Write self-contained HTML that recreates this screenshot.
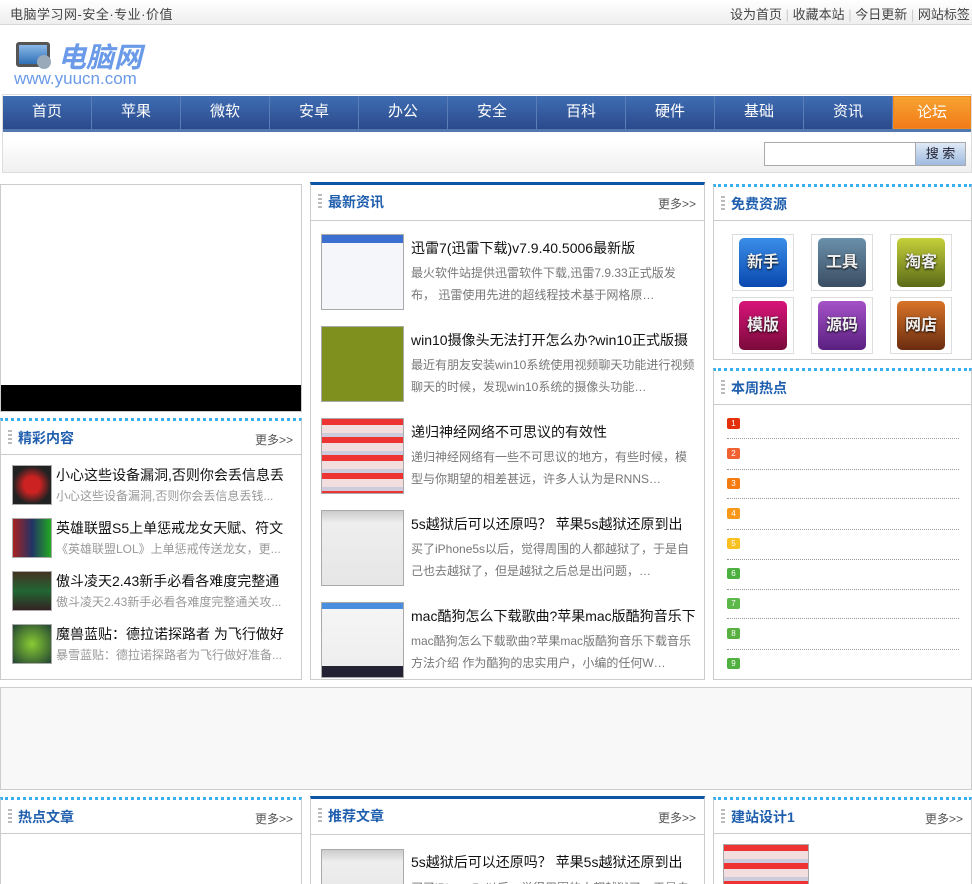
<!DOCTYPE html>
<html style="height:884px;overflow:hidden"><head><meta charset="utf-8"><style>
*{margin:0;padding:0;box-sizing:border-box}
body{width:972px;height:884px;overflow:hidden;background:#fff;font-family:"Liberation Sans","Noto Sans CJK SC",sans-serif;font-size:13px;color:#333;position:relative}
.a{position:absolute}
.top{left:0;top:0;width:972px;height:25px;background:linear-gradient(#fff,#eee);border-bottom:1px solid #d8d8d8}
.nav{left:2px;top:94px;width:970px;height:79px;border:1px solid #ddd;background:linear-gradient(#fff 40px,#fff 45px,#f0f0f0)}
.navbar{left:3px;top:96px;width:968px;height:36px;background:#5278b0}
.ni{top:96px;height:33px;background:linear-gradient(#3f6db3,#2b4a8c);color:#fff;font-size:15px;text-align:center;line-height:31px;border-right:1px solid #5a7fb8}
.box{border:1px solid #ccc;background:#fff}
.dot{border-top:3px dotted #39b0ee}
.blu{border-top:3px solid #0d56a6}
.hd{position:absolute;left:0;right:0;top:0;height:34px;border-bottom:1px solid #ccc}
.hd b{position:absolute;left:17px;top:7px;font-size:14px;color:#1f5fae;font-weight:bold}
.hd i{position:absolute;left:7px;top:9px;width:4px;height:14px;border-left:2px dotted #bbb;border-right:2px dotted #bbb}
.hd s{position:absolute;right:8px;top:10px;text-decoration:none;color:#555;font-size:12px}
.th{position:absolute;border:1px solid #aaa}
.t{position:absolute;font-size:14px;color:#111;white-space:nowrap}
.d{position:absolute;font-size:12px;color:#777;line-height:22px}
.ic{position:absolute;width:62px;height:57px;border:1px solid #ddd;padding:3px 6px}
.ic div{width:48px;height:49px;border-radius:5px;color:#eee;font-size:16px;font-weight:bold;text-align:center;line-height:49px;text-shadow:0 1px 2px #000}
.n{position:absolute;left:13px;width:13px;height:11px;border-radius:2px;color:#fff;font-size:8px;text-align:center;line-height:11px}
.ln{position:absolute;left:13px;width:232px;border-top:1px dotted #999}
</style></head><body>
<div class="a top"></div>
<div class="a" style="left:10px;top:4px;font-size:13px;color:#444;letter-spacing:0.5px">电脑学习网-安全·专业·价值</div>
<div class="a" style="left:730px;top:4px;font-size:13px;color:#444">设为首页 <span style="color:#ccc">|</span> 收藏本站 <span style="color:#ccc">|</span> 今日更新 <span style="color:#ccc">|</span> 网站标签</div>
<div class="a" style="left:16px;top:42px;width:34px;height:25px;background:linear-gradient(#8ab8e8,#2f6fb6);border:3px solid #555;border-radius:3px"></div>
<div class="a" style="left:37px;top:55px;width:14px;height:14px;border-radius:50%;background:#9ab"></div>
<div class="a" style="left:58px;top:36px;font-size:28px;font-style:italic;font-weight:bold;color:#6a9ae8">电脑网</div>
<div class="a" style="left:14px;top:69px;font-size:17px;color:#6a9ae8">www.yuucn.com</div>
<div class="a nav"></div>
<div class="a navbar"></div>
<div class="a ni" style="left:3px;width:89px">首页</div>
<div class="a ni" style="left:92px;width:89px">苹果</div>
<div class="a ni" style="left:181px;width:89px">微软</div>
<div class="a ni" style="left:270px;width:89px">安卓</div>
<div class="a ni" style="left:359px;width:89px">办公</div>
<div class="a ni" style="left:448px;width:89px">安全</div>
<div class="a ni" style="left:537px;width:89px">百科</div>
<div class="a ni" style="left:626px;width:89px">硬件</div>
<div class="a ni" style="left:715px;width:89px">基础</div>
<div class="a ni" style="left:804px;width:89px">资讯</div>
<div class="a ni" style="left:893px;width:78px;background:linear-gradient(#f6a432,#f27a18);border:1px solid #f08a20">论坛</div>
<div class="a" style="left:764px;top:142px;width:152px;height:24px;border:1px solid #aaa;background:#fff"></div>
<div class="a" style="left:915px;top:142px;width:51px;height:24px;border:1px solid #aaa;background:linear-gradient(#dfe9f6,#9fbbe0);text-align:center;line-height:22px;color:#223;font-size:13px">搜 索</div>

<div class="a box" style="left:0;top:184px;width:302px;height:228px"><div class="a" style="left:0;bottom:0;width:300px;height:26px;background:#000"></div></div>
<div class="a box dot" style="left:0;top:418px;width:302px;height:262px">
<div class="hd"><i></i><b>精彩内容</b><s>更多&gt;&gt;</s></div>
<div class="th" style="left:11px;top:44px;width:40px;height:40px;background:radial-gradient(#c22 30%,#222 70%)"></div>
<div class="t" style="left:55px;top:44px">小心这些设备漏洞,否则你会丢信息丢</div><div class="d" style="left:55px;top:64px;color:#999">小心这些设备漏洞,否则你会丢信息丢钱...</div>
<div class="th" style="left:11px;top:97px;width:40px;height:40px;background:linear-gradient(90deg,#a22,#236,#2a2)"></div>
<div class="t" style="left:55px;top:97px">英雄联盟S5上单惩戒龙女天赋、符文</div><div class="d" style="left:55px;top:117px;color:#999">《英雄联盟LOL》上单惩戒传送龙女，更...</div>
<div class="th" style="left:11px;top:150px;width:40px;height:40px;background:linear-gradient(#432,#263,#322)"></div>
<div class="t" style="left:55px;top:150px">傲斗凌天2.43新手必看各难度完整通</div><div class="d" style="left:55px;top:170px;color:#999">傲斗凌天2.43新手必看各难度完整通关攻...</div>
<div class="th" style="left:11px;top:203px;width:40px;height:40px;background:radial-gradient(#8c3,#243)"></div>
<div class="t" style="left:55px;top:203px">魔兽蓝贴：德拉诺探路者 为飞行做好</div><div class="d" style="left:55px;top:223px;color:#999">暴雪蓝贴：德拉诺探路者为飞行做好准备...</div>
</div>

<div class="a box blu" style="left:310px;top:182px;width:395px;height:498px">
<div class="hd" style="height:36px"><i></i><b>最新资讯</b><s>更多&gt;&gt;</s></div>
<div class="th" style="left:10px;top:49px;width:83px;height:76px;background:linear-gradient(#3b6fd0 8px,#f4f6fa 8px)"></div>
<div class="t" style="left:100px;top:53px">迅雷7(迅雷下载)v7.9.40.5006最新版</div><div class="d" style="left:100px;top:77px;width:285px">最火软件站提供迅雷软件下载,迅雷7.9.33正式版发布， 迅雷使用先进的超线程技术基于网格原…</div>
<div class="th" style="left:10px;top:141px;width:83px;height:76px;background:#7f901e"></div>
<div class="t" style="left:100px;top:145px">win10摄像头无法打开怎么办?win10正式版摄</div><div class="d" style="left:100px;top:169px;width:285px">最近有朋友安装win10系统使用视频聊天功能进行视频聊天的时候，发现win10系统的摄像头功能…</div>
<div class="th" style="left:10px;top:233px;width:83px;height:76px;background:repeating-linear-gradient(#e33 0 6px,#f2dede 6px 14px,#ccd 14px 18px)"></div>
<div class="t" style="left:100px;top:237px">递归神经网络不可思议的有效性</div><div class="d" style="left:100px;top:261px;width:285px">递归神经网络有一些不可思议的地方，有些时候，模型与你期望的相差甚远，许多人认为是RNNS…</div>
<div class="th" style="left:10px;top:325px;width:83px;height:76px;background:linear-gradient(#ccc,#eee 12px,#e6e6e6)"></div>
<div class="t" style="left:100px;top:329px">5s越狱后可以还原吗？ 苹果5s越狱还原到出</div><div class="d" style="left:100px;top:353px;width:285px">买了iPhone5s以后，觉得周围的人都越狱了，于是自己也去越狱了，但是越狱之后总是出问题，…</div>
<div class="th" style="left:10px;top:417px;width:83px;height:76px;background:linear-gradient(#4a8ee0 6px,#f5f5f5 6px,#eee 85%,#223 85%)"></div>
<div class="t" style="left:100px;top:421px">mac酷狗怎么下载歌曲?苹果mac版酷狗音乐下</div><div class="d" style="left:100px;top:445px;width:285px">mac酷狗怎么下载歌曲?苹果mac版酷狗音乐下载音乐方法介绍 作为酷狗的忠实用户，小编的任何W…</div>
</div>

<div class="a box dot" style="left:713px;top:184px;width:259px;height:176px">
<div class="hd"><i></i><b>免费资源</b></div>
<div class="ic" style="left:18px;top:47px"><div style="background:linear-gradient(#3a8ee8,#0a48b0)">新手</div></div>
<div class="ic" style="left:97px;top:47px"><div style="background:linear-gradient(#6a90ab,#3a4d62)">工具</div></div>
<div class="ic" style="left:176px;top:47px"><div style="background:linear-gradient(#c6d03a,#5a6a18)">淘客</div></div>
<div class="ic" style="left:18px;top:110px"><div style="background:linear-gradient(#d8147a,#7a0a3a)">模版</div></div>
<div class="ic" style="left:97px;top:110px"><div style="background:linear-gradient(#a552c8,#5a1f80)">源码</div></div>
<div class="ic" style="left:176px;top:110px"><div style="background:linear-gradient(#d87428,#6a2c10)">网店</div></div>
</div>
<div class="a box dot" style="left:713px;top:368px;width:259px;height:312px">
<div class="hd"><i></i><b>本周热点</b></div>
<div class="n" style="top:47px;background:#e3300a">1</div><div class="ln" style="top:67px"></div>
<div class="n" style="top:77px;background:#f06030">2</div><div class="ln" style="top:98px"></div>
<div class="n" style="top:107px;background:#f57a10">3</div><div class="ln" style="top:127px"></div>
<div class="n" style="top:137px;background:#f8981a">4</div><div class="ln" style="top:158px"></div>
<div class="n" style="top:167px;background:#f8c020">5</div><div class="ln" style="top:188px"></div>
<div class="n" style="top:197px;background:#4cb040">6</div><div class="ln" style="top:218px"></div>
<div class="n" style="top:227px;background:#5cb848">7</div><div class="ln" style="top:247px"></div>
<div class="n" style="top:257px;background:#58b040">8</div><div class="ln" style="top:278px"></div>
<div class="n" style="top:287px;background:#50b040">9</div>
</div>

<div class="a box" style="left:0;top:687px;width:972px;height:103px;background:#f8f8f8"></div>

<div class="a box dot" style="left:0;top:797px;width:302px;height:100px"><div class="hd"><i></i><b>热点文章</b><s>更多&gt;&gt;</s></div></div>
<div class="a box blu" style="left:310px;top:796px;width:395px;height:100px;overflow:hidden">
<div class="hd" style="height:36px"><i></i><b>推荐文章</b><s>更多&gt;&gt;</s></div>
<div class="th" style="left:10px;top:50px;width:83px;height:60px;background:linear-gradient(#ccc,#eee 12px,#e6e6e6)"></div>
<div class="t" style="left:100px;top:53px">5s越狱后可以还原吗？ 苹果5s越狱还原到出</div>
<div class="d" style="left:100px;top:78px">买了iPhone5s以后，觉得周围的人都越狱了，于是自</div>
</div>
<div class="a box dot" style="left:713px;top:797px;width:259px;height:100px;overflow:hidden">
<div class="hd"><i></i><b>建站设计1</b><s>更多&gt;&gt;</s></div>
<div class="th" style="left:9px;top:44px;width:86px;height:60px;background:repeating-linear-gradient(#e33 0 6px,#f2dede 6px 14px,#ccd 14px 18px)"></div>
</div>
</body></html>
